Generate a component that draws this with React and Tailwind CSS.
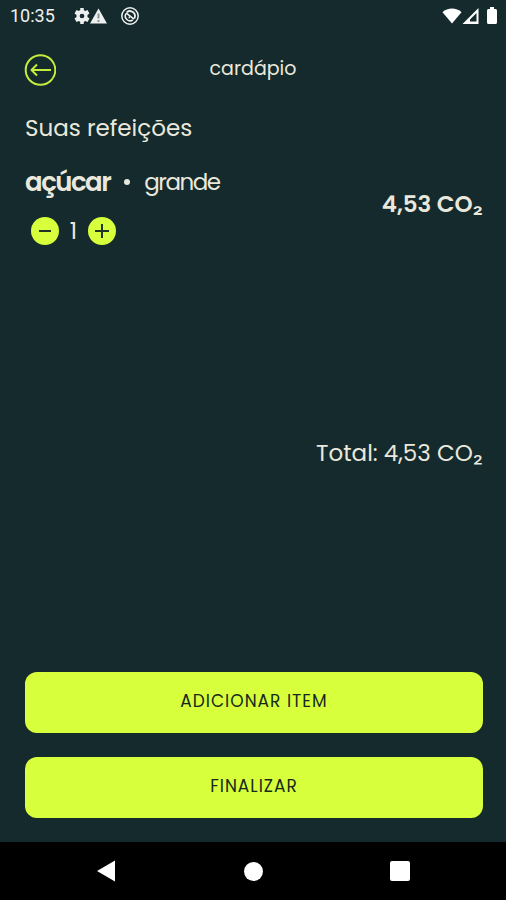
import React, { useState } from "react";

function StatusBar() {
  return (
    <div className="flex h-8 items-center justify-between pl-2.5 pr-2 font-[Roboto,sans-serif] text-[#eef0f0]">
      <div className="flex items-center">
        <span className="text-lg leading-8">10:35</span>
        <svg viewBox="0 0 24 24" className="ml-[19px] size-4 scale-110" fill="currentColor" aria-hidden="true">
          <path fillRule="evenodd" d="M19.400 13.500a7.500 7.500 0 0 0 0-3l2.800-2-2.700-4.700-3.100 1.300a8 8 0 0 0-1.900-1L14.300 1h-4.600L9.500 4.100a8 8 0 0 0-1.900 1L4.500 3.800 1.800 8.500l2.800 2a7.500 7.500 0 0 0 0 3l-2.800 2 2.700 4.700 3.100-1.300a8 8 0 0 0 1.900 1l.2 3.100h4.600l.2-3.100a8 8 0 0 0 1.900-1l3.100 1.300 2.700-4.700zM12 15.200a3.200 3.200 0 1 1 0-6.400 3.200 3.200 0 0 1 0 6.400z" />
        </svg>
        <svg viewBox="0 0 18 16" className="h-4 w-[18px]" aria-hidden="true">
          <path d="M8.500 0.500 17 15.500H0z" fill="currentColor" />
          <path d="M8.500 5.500v5M8.500 12v2" stroke="#8d9796" strokeWidth="2" />
        </svg>
        <svg viewBox="0 0 20 20" className="ml-3 size-5" fill="none" stroke="currentColor" aria-hidden="true">
          <circle cx="10" cy="10" r="8.200" strokeWidth="1.500" />
          <path d="M6 7.600A4.800 4.800 0 0 0 12.800 14" strokeWidth="1.600" />
          <path d="M6.800 6.200A5 5 0 0 1 14.300 12.500" strokeWidth="1.800" />
          <path d="M6 6.800 14 13.200M8.500 11.500h1.500" strokeWidth="1.600" />
        </svg>
      </div>
      <div className="flex items-center text-white">
        <svg viewBox="0 0 20 16" className="h-4 w-5" fill="currentColor" aria-hidden="true">
          <path d="M10 15.500 0.500 4.200C5.500-.7 14.500-.7 19.500 4.200z" />
        </svg>
        <svg viewBox="0 0 18 16" className="h-4 w-[18px]" fill="currentColor" aria-hidden="true">
          <path fillRule="evenodd" d="M16.500 0v16H.5zM14.500 5 8 11.500V13.500h6.500z" />
        </svg>
        <svg viewBox="0 0 12 18" className="ml-1.5 h-[18px] w-3" fill="currentColor" aria-hidden="true">
          <path d="M4 0h4v2h1.500A1.500 1.500 0 0 1 11 3.500v12A1.500 1.500 0 0 1 9.500 17h-7A1.500 1.500 0 0 1 1 15.500v-12A1.500 1.500 0 0 1 2.500 2H4z" />
        </svg>
      </div>
    </div>
  );
}

function RoundButton({ label, onClick, children }) {
  return (
    <button
      type="button"
      aria-label={label}
      onClick={onClick}
      className="flex size-7 items-center justify-center rounded-full bg-[#d7ff3b] text-[#1f3425]"
    >
      <svg viewBox="0 0 28 28" className="size-7" fill="none" stroke="currentColor" strokeWidth="2" aria-hidden="true">
        {children}
      </svg>
    </button>
  );
}

function ActionButton({ children }) {
  return (
    <button
      type="button"
      className="flex h-[61px] w-full items-center justify-center rounded-xl bg-[#d7ff3b] pb-1 text-[17px] tracking-[1px] text-[#16291b]"
    >
      {children}
    </button>
  );
}

export default function App() {
  const [count, setCount] = useState(1);
  const amount = (count * 4.53).toFixed(2).replace(".", ",");

  return (
    <div className="flex min-h-screen flex-col bg-[#142a2c] font-[Poppins,Inter,sans-serif] text-[#eae8dc]">
      <StatusBar />

      <header className="grid grid-cols-[32px_1fr_32px] items-center px-6 pt-[22px]">
        <button type="button" aria-label="Voltar" className="size-8 text-[#c5ec3c]">
          <svg viewBox="0 0 32 32" className="size-8" fill="none" stroke="currentColor" strokeWidth="2" aria-hidden="true">
            <circle cx="16.500" cy="16" r="14.800" />
            <path d="M27 16H7.500M13 10.500 7.500 16l5.500 5.500" strokeLinejoin="round" />
          </svg>
        </button>
        <h1 className="pb-0.5 text-center text-[19px] leading-7">cardápio</h1>
      </header>

      <main className="flex grow flex-col pt-6 pr-[23px] pl-[25px] text-[23px] leading-9">
        <h2>Suas refeições</h2>

        <ul className="mt-4 min-h-[273px]">
          <li className="flex items-center justify-between">
            <div>
              <p className="flex items-center leading-10 tracking-[-1.5px]">
                <strong className="text-[26px] font-semibold">açúcar</strong>
                <span className="mx-3.5 size-1.5 rounded-full bg-[#eae8dc]" />
                <span>grande</span>
              </p>
              <div className="mt-[15px] flex items-center gap-2 pl-1.5">
                <RoundButton label="Diminuir" onClick={() => setCount(Math.max(1, count - 1))}>
                  <path d="M8 14h12" />
                </RoundButton>
                <output className="w-[13px] text-center leading-7">{count}</output>
                <RoundButton label="Aumentar" onClick={() => setCount(count + 1)}>
                  <path d="M7 14h14M14 7v14" />
                </RoundButton>
              </div>
            </div>
            <p className="font-semibold">{amount} CO₂</p>
          </li>
        </ul>

        <p className="text-right">Total: {amount} CO₂</p>

        <div className="mt-auto flex flex-col gap-6 pb-6">
          <ActionButton>ADICIONAR ITEM</ActionButton>
          <ActionButton>FINALIZAR</ActionButton>
        </div>
      </main>

      <nav aria-label="Sistema" className="flex h-[58px] items-center justify-between bg-black px-24 text-white">
        <button type="button" aria-label="Voltar à tela anterior" className="size-5">
          <svg viewBox="0 0 20 22" className="size-5 scale-110" fill="currentColor" aria-hidden="true">
            <path d="M19 0.500v21L1 11z" />
          </svg>
        </button>
        <button type="button" aria-label="Início" className="size-[19px] rounded-full bg-white" />
        <button type="button" aria-label="Aplicativos recentes" className="size-5 rounded-xs bg-white" />
      </nav>
    </div>
  );
}
